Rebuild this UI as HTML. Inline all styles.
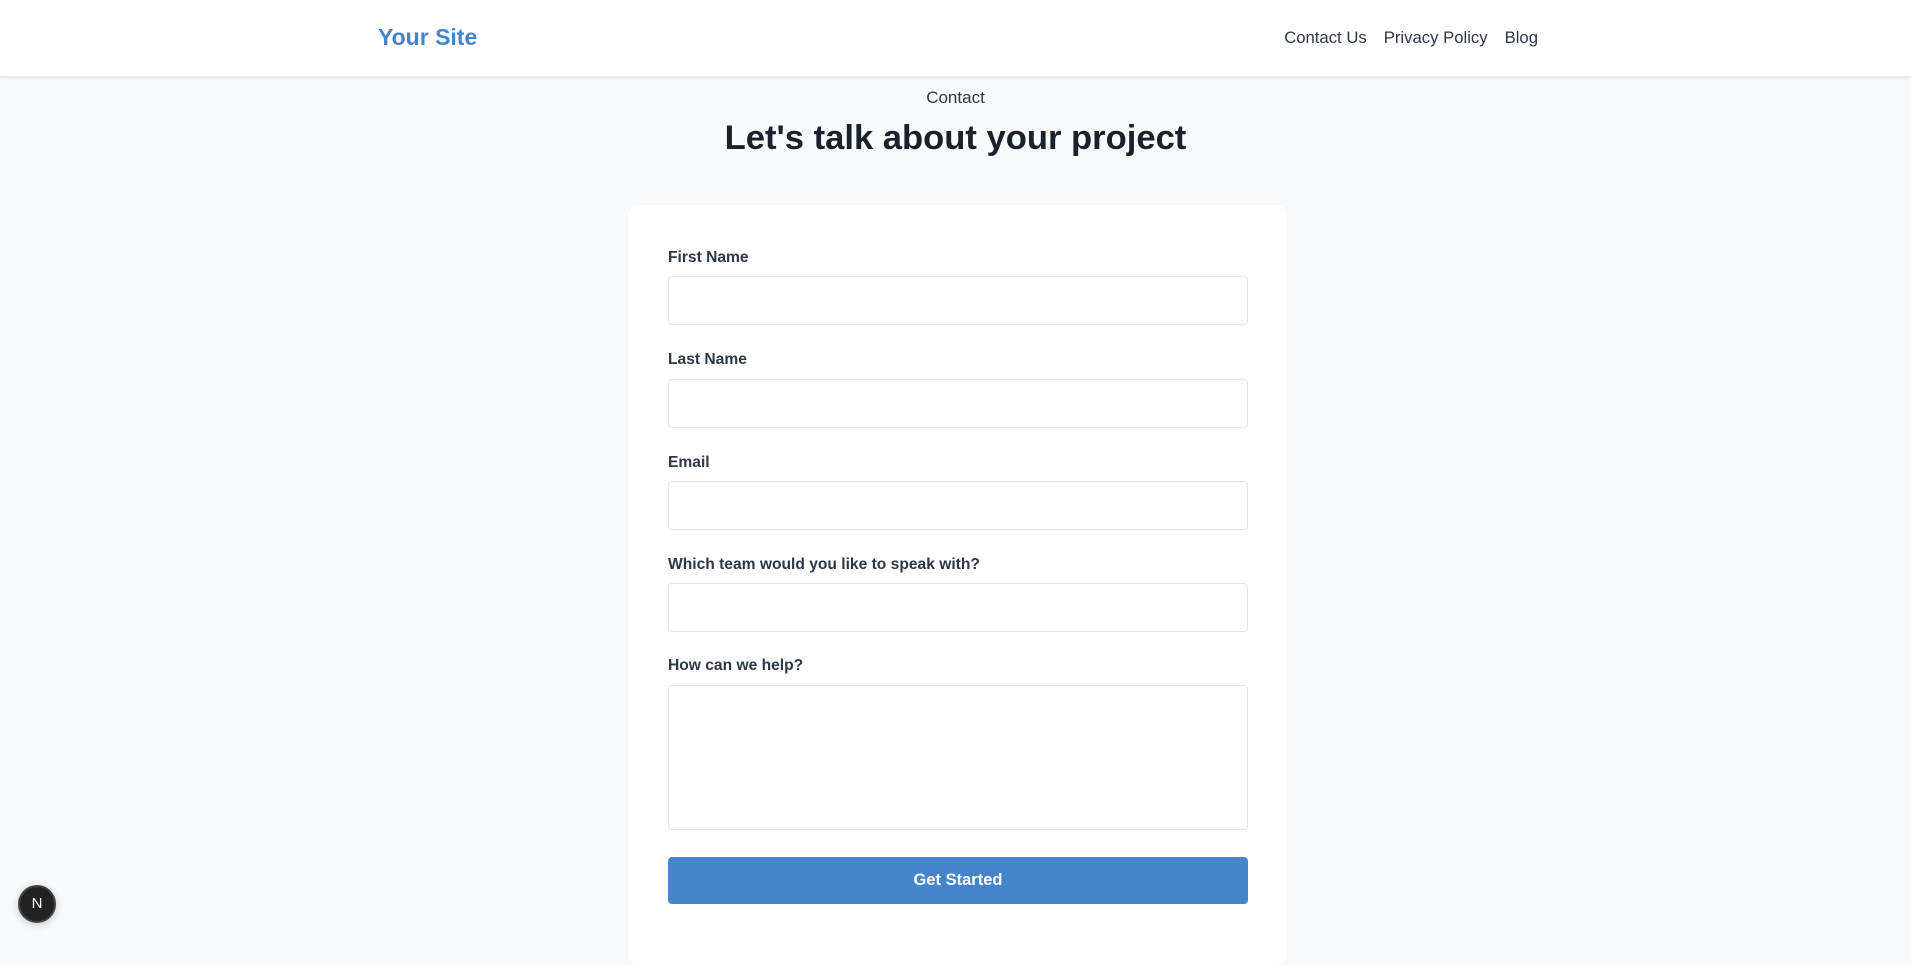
<!DOCTYPE html>
<html><head><meta charset="utf-8"><style>
*{box-sizing:border-box;margin:0;padding:0}
body{width:1911px;height:938px;overflow:hidden;background:#f7f9fb;font-family:"Liberation Sans",Arial,sans-serif;color:#1a202c;position:relative}
.hdr{position:absolute;left:0;top:0;width:1911px;height:77px;background:#fff;box-shadow:0 1px 3px rgba(0,0,0,0.1);border-bottom:1px solid #e8ebef}
.logo{position:absolute;left:378px;top:24px;font-size:23px;font-weight:bold;color:#4484c9}
.nav{position:absolute;right:373px;top:28px;font-size:16.7px;color:#2d3748}
.nav span{margin-left:17px}
.sub{position:absolute;left:0;width:1911px;top:88px;text-align:center;font-size:17px;color:#2d3748}
h1{position:absolute;left:0;width:1911px;top:119px;text-align:center;font-size:34.6px;font-weight:bold;color:#1a202c}
.card{position:absolute;left:628px;top:205px;width:659px;height:760px;background:#fff;border-radius:10px;box-shadow:0 1px 2px rgba(0,0,0,0.04)}
.lbl{position:absolute;left:668px;font-size:15.6px;font-weight:bold;color:#2d3748}
.inp{position:absolute;left:668px;width:580px;height:49px;border:1px solid #e2e6ec;border-radius:4px;background:#fff}
.btn{position:absolute;left:668px;top:857px;width:580px;height:47px;background:#4484c9;border-radius:4px;color:#fff;font-weight:bold;font-size:16.5px;text-align:center;line-height:47px}
.n{position:absolute;left:18px;top:885px;width:38px;height:38px;border-radius:50%;background:#222;border:2px solid #444;color:#fff;font-size:15px;text-align:center;line-height:34px;box-shadow:0 2px 8px rgba(0,0,0,0.2)}
</style></head><body>
<div class="hdr"><div class="logo">Your Site</div><div class="nav"><span>Contact Us</span><span>Privacy Policy</span><span>Blog</span></div></div>
<div class="sub">Contact</div>
<h1>Let's talk about your project</h1>
<div class="card"></div>
<div class="lbl" style="top:249px">First Name</div>
<div class="inp" style="top:276px"></div>
<div class="lbl" style="top:351px">Last Name</div>
<div class="inp" style="top:379px"></div>
<div class="lbl" style="top:454px">Email</div>
<div class="inp" style="top:481px"></div>
<div class="lbl" style="top:556px">Which team would you like to speak with?</div>
<div class="inp" style="top:583px"></div>
<div class="lbl" style="top:657px">How can we help?</div>
<div class="inp" style="top:685px;height:145px"></div>
<div class="btn">Get Started</div>
<div class="n">N</div>
</body></html>
